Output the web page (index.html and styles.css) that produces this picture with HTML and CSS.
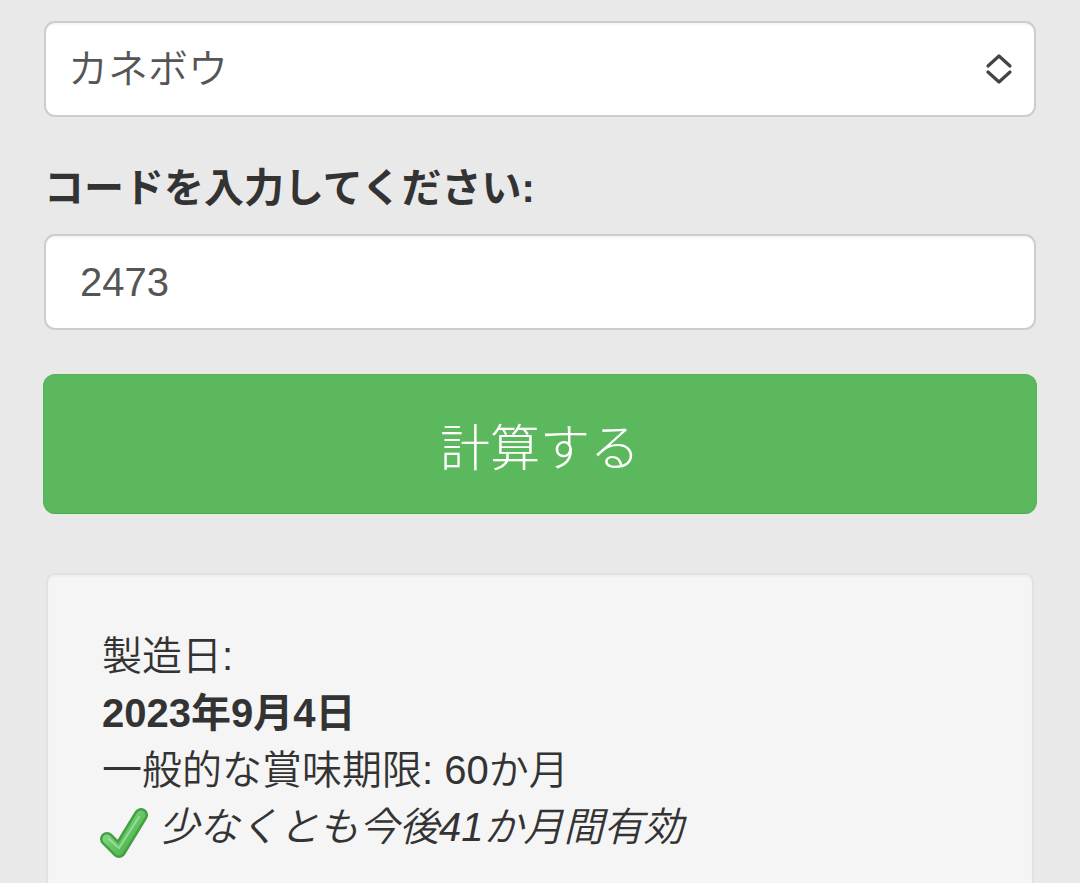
FILE: index.html
```html
<!DOCTYPE html>
<html lang="ja">
<head>
<meta charset="utf-8">
<title>賞味期限チェッカー</title>
<link rel="stylesheet" href="styles.css">
</head>
<body>
<main class="page">
  <div class="select-box">
    <span class="select-text">カネボウ</span>
    <svg class="select-arrows" width="28" height="32" viewBox="0 0 28 32" aria-hidden="true">
      <polyline points="3,13 14,3 25,13" fill="none" stroke="#444" stroke-width="3.2" stroke-linecap="round" stroke-linejoin="round"/>
      <polyline points="3,19 14,29 25,19" fill="none" stroke="#444" stroke-width="3.2" stroke-linecap="round" stroke-linejoin="round"/>
    </svg>
  </div>

  <div class="field-label">コードを入力してください:</div>

  <div class="input-box">2473</div>

  <div class="btn-calc">計算する</div>

  <section class="well">
    <div class="line">製造日:</div>
    <div class="line strong">2023年9月4日</div>
    <div class="line">一般的な賞味期限: 60か月</div>
    <div class="line check-line">
      <svg class="check-icon" width="50" height="52" viewBox="0 0 50 52" aria-hidden="true">
        <defs>
          <linearGradient id="cg" x1="0" y1="0" x2="1" y2="1">
            <stop offset="0" stop-color="#a2e6a2"/>
            <stop offset="0.5" stop-color="#66c766"/>
            <stop offset="1" stop-color="#44ab44"/>
          </linearGradient>
        </defs>
        <polyline points="8,33 20,45 42,9" fill="none" stroke="#45a045" stroke-width="14" stroke-linecap="round" stroke-linejoin="round"/>
        <polyline points="8,33 20,45 42,9" fill="none" stroke="url(#cg)" stroke-width="9" stroke-linecap="round" stroke-linejoin="round"/>
        <polyline points="10,33 20,42 40,11" fill="none" stroke="#c0efc0" stroke-width="2" stroke-linecap="round" stroke-linejoin="round" opacity="0.55"/>
      </svg>
      <em class="valid">少なくとも今後41か月間有効</em>
    </div>
  </section>
</main>
</body>
</html>
```

FILE: styles.css
```css
html, body {
  margin: 0;
  padding: 0;
}

body {
  background: #e9e9e9;
  font-family: "Liberation Sans", "Noto Sans CJK JP", sans-serif;
  font-size: 40px;
  line-height: 57px;
  font-weight: 350;
  color: #333;
  overflow: hidden;
}

.page {
  padding: 21px 44px 0;
}

.select-box {
  box-sizing: border-box;
  height: 96px;
  background: #fff;
  border: 2px solid #cdcdcd;
  border-radius: 11px;
  display: flex;
  align-items: center;
  justify-content: space-between;
  padding: 0 21px 0 22px;
  color: #555;
  box-shadow: inset 0 2px 2px rgba(0, 0, 0, 0.04);
}

.select-arrows {
  display: block;
}

.field-label {
  font-weight: bold;
  margin-top: 43px;
  margin-bottom: 17px;
  color: #333;
}

.input-box {
  box-sizing: border-box;
  height: 96px;
  background: #fff;
  border: 2px solid #cdcdcd;
  border-radius: 11px;
  display: flex;
  align-items: center;
  padding: 0 34px;
  color: #555;
  box-shadow: inset 0 2px 2px rgba(0, 0, 0, 0.04);
}

.btn-calc {
  box-sizing: border-box;
  height: 140px;
  margin: 44px -1px 0;
  background: #5cb85c;
  border: 1px solid #55b255;
  border-bottom-color: #4cae4c;
  border-radius: 12px;
  color: #fff;
  font-size: 50px;
  font-weight: 300;
  display: flex;
  align-items: center;
  justify-content: center;
  padding-top: 10px;
}

.well {
  margin: 59px 2px 0;
  background: #f5f5f5;
  border: 2px solid #e2e2e2;
  border-radius: 9px;
  padding: 53px 54px 60px;
  box-shadow: inset 0 2px 2px rgba(0, 0, 0, 0.03);
}

.line {
  height: 57px;
}

.strong {
  font-weight: bold;
}

.check-line {
  display: flex;
  align-items: center;
  gap: 10px;
  margin-left: -3px;
}

.check-icon {
  display: block;
  margin-top: 8px;
}

.valid {
  font-style: italic;
}
```
